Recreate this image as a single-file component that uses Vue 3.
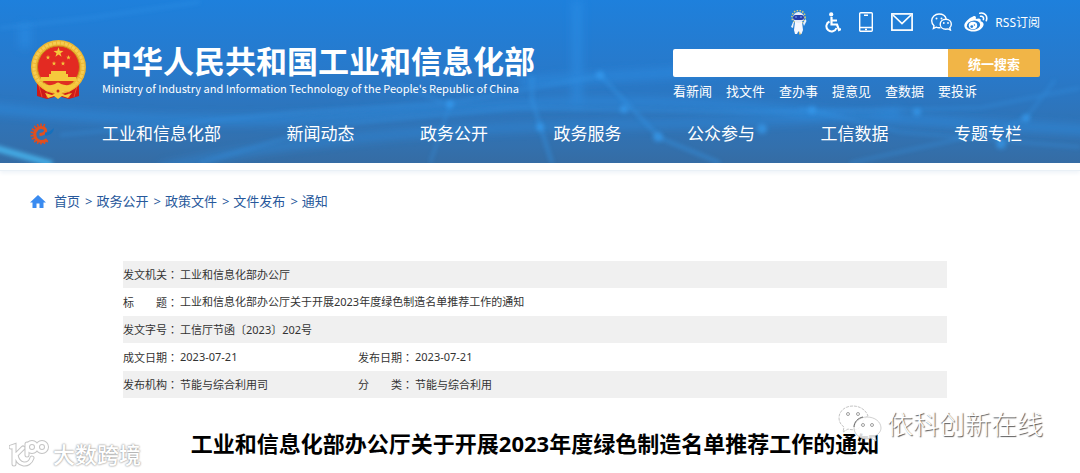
<script setup>
const searchLinks = ['看新闻', '找文件', '查办事', '提意见', '查数据', '要投诉']
const navItems = ['工业和信息化部', '新闻动态', '政务公开', '政务服务', '公众参与', '工信数据', '专题专栏']
const crumbs = ['首页', '政务公开', '政策文件', '文件发布', '通知']
const rows = [
  [['发文机关', '工业和信息化部办公厅']],
  [['标　　题', '工业和信息化部办公厅关于开展2023年度绿色制造名单推荐工作的通知']],
  [['发文字号', '工信厅节函〔2023〕202号']],
  [['成文日期', '2023-07-21'], ['发布日期', '2023-07-21']],
  [['发布机构', '节能与综合利用司'], ['分　　类', '节能与综合利用']]
]
const star = (cx, cy, r) =>
  Array.from({ length: 10 }, (_, i) => {
    const a = -Math.PI / 2 + (i * Math.PI) / 5
    const d = i % 2 ? r * 0.4 : r
    return `${(cx + d * Math.cos(a)).toFixed(2)},${(cy + d * Math.sin(a)).toFixed(2)}`
  }).join(' ')
const rays = Array.from({ length: 13 }, (_, i) => 50 + i * 20)
</script>

<template>
  <div class="page">
    <header class="banner">
      <svg class="backdrop" viewBox="0 0 1080 163" preserveAspectRatio="none" aria-hidden="true">
        <defs>
          <filter id="soft" x="-20%" y="-50%" width="140%" height="200%"><feGaussianBlur stdDeviation="2" /></filter>
          <filter id="softer" x="-50%" y="-50%" width="200%" height="200%"><feGaussianBlur stdDeviation="5" /></filter>
        </defs>
        <g filter="url(#softer)" fill="none" stroke="#2d93ea" opacity=".55">
          <path d="M577 0V108" stroke-width="9" />
          <path d="M25 25V48" stroke-width="10" />
          <path d="M-10 108Q200 130 400 112T760 108T1090 130" stroke-width="8" />
          <path d="M160 168Q330 130 600 125T900 110" stroke-width="6" />
          <path d="M520 82L720 70" stroke-width="8" />
        </g>
        <g filter="url(#soft)" fill="none" stroke="#3498ea" opacity=".5">
          <path d="M200 163L330 125L520 108L740 112L980 108L1080 88" stroke-width="2" />
          <path d="M60 135L300 112L450 103L600 76" stroke-width="2" />
          <path d="M532 75L532 100L552 163" stroke-width="3" />
          <path d="M600 75L660 138L720 163" stroke-width="3" />
          <path d="M850 163L1000 130L1026 118L1055 80" stroke-width="2" />
          <path d="M800 108L900 132L1080 147" stroke-width="2" />
          <path d="M430 163L450 105L400 85" stroke-width="2" />
          <path d="M0 28L90 18L200 2" stroke-width="2" />
        </g>
        <g filter="url(#soft)" fill="#38a0f5" opacity=".6">
          <circle cx="450" cy="104" r="4" /><circle cx="540" cy="127" r="4" />
          <circle cx="600" cy="75" r="4" /><circle cx="624" cy="109" r="4" />
          <circle cx="658" cy="137" r="5" /><circle cx="762" cy="129" r="5" />
          <circle cx="812" cy="110" r="4" /><circle cx="917" cy="112" r="4" />
          <circle cx="1026" cy="118" r="4" /><circle cx="1001" cy="144" r="5" />
        </g>
        <path d="M-5 148L52 164" stroke="#4abcf5" stroke-width="6" filter="url(#soft)" opacity=".8" />
      </svg>

      <div class="inner">
        <ul class="tools">
          <li><a href="#" aria-label="智能问答">
            <svg width="17" height="25" viewBox="0 0 17 25">
              <circle cx="8.5" cy="7" r="6.6" fill="none" stroke="#d8cb70" stroke-width="1.6" stroke-dasharray="1.5 1.4" />
              <path d="M4 12L3 18L1 17L3 12ZM13 13L15.500 9L16.500 11L14 16Z" fill="#e8eff9" />
              <path d="M5 12H12L13 20L11.500 24H9.500L8.500 21L7 24H5L4 20Z" fill="#f5f8ff" />
              <path d="M9.500 21L9 24.500H11Z" fill="#d6b95c" />
              <ellipse cx="8.500" cy="7.500" rx="5.600" ry="5.400" fill="#e5edfa" />
              <rect x="3" y="5" width="11" height="5" rx="2.500" fill="#263fab" />
              <path d="M5 7H7M10 7H12" stroke="#6ca8ff" />
            </svg></a></li>
          <li><a href="#" aria-label="无障碍">
            <svg width="16" height="21" viewBox="0 0 16 21" fill="none" stroke="#fff" stroke-width="2">
              <circle cx="6.200" cy="2.400" r="2.100" fill="#fff" stroke="none" />
              <path d="M6.500 5V12.500H12L14 18L16 17" stroke-width="2.200" /><path d="M6.500 8.500H12" />
              <path d="M4.500 9.500A5.200 5.200 0 1 0 11.500 16" />
            </svg></a></li>
          <li><a href="#" aria-label="手机版">
            <svg width="14" height="20" viewBox="0 0 14 20" fill="none" stroke="#fff" stroke-width="1.400">
              <rect x=".7" y=".7" width="12.600" height="18.600" rx="1" /><path d="M1 15.500H13M5 3.200H9M6 17.500H8" />
            </svg></a></li>
          <li><a href="#" aria-label="邮箱">
            <svg width="22" height="18" viewBox="0 0 22 18" fill="none" stroke="#fff" stroke-width="1.700">
              <rect x=".9" y=".9" width="20.200" height="16.200" /><path d="M2 2L11 10.500L20 2" />
            </svg></a></li>
          <li><a href="#" aria-label="微信">
            <svg width="21" height="18" viewBox="0 0 21 18" fill="none" stroke="#fff" stroke-width="1.400">
              <path d="M9.500 14.500C8 15 6.500 14.800 5.200 14.200L2.400 15.500L3 12.800C1.500 11.500 .7 9.800 .7 7.800C.7 3.900 4 1 8 1C11.600 1 14.500 3.100 15.200 6" />
              <path d="M14.800 6.200C11.600 6.200 9.200 8.400 9.200 11.200C9.200 14 11.600 16.200 14.800 16.200L17 15.900L19.400 17L18.800 14.800C19.800 13.800 20.300 12.600 20.300 11.200C20.300 8.400 18 6.200 14.800 6.200Z" />
              <g fill="#fff" stroke="none"><circle cx="5.500" cy="5.500" r="1" /><circle cx="10.500" cy="5.500" r="1" /><circle cx="12.800" cy="10" r=".9" /><circle cx="17" cy="10" r=".9" /></g>
            </svg></a></li>
          <li class="social"><a href="#" aria-label="微博">
            <svg width="24" height="20" viewBox="0 0 24 20">
              <path d="M9 4.500C11 3.500 12.500 4.500 11.800 7C15 5.800 17.500 6.300 16.600 9.300C19.200 10 20.500 12 19 14.500C17.400 17.500 13.500 19.500 9.300 19.500C4 19.500 .3 17 .3 13.500C.3 10.500 5 6 9 4.500Z" fill="#fff" />
              <ellipse cx="9.500" cy="13.200" rx="6.700" ry="4.600" fill="#247ed6" transform="rotate(-8 9.500 13.200)" />
              <ellipse cx="9" cy="13.500" rx="4.200" ry="3.700" fill="#fff" />
              <circle cx="7.800" cy="14.600" r="1.400" fill="#247ed6" /><circle cx="10.400" cy="13" r=".7" fill="#247ed6" />
              <path d="M15.800 1.200C20.500 .1 24 4 22.300 8.600M16.600 4.300C18.700 3.900 20 5.500 19.400 7.600" fill="none" stroke="#fff" stroke-width="1.600" stroke-linecap="round" />
            </svg></a><a href="#">RSS订阅</a></li>
        </ul>

        <div class="masthead">
          <svg class="emblem" width="56" height="60" viewBox="0 0 56 60" role="img" aria-label="国徽">
            <path d="M7 42L7 56L17 59L28 56L39 59L49 56L49 42Z" fill="#cd1a18" />
            <path d="M9 46L12 57M17 49V58M47 46L44 57M39 49V58" stroke="#ee4630" />
            <ellipse cx="28.500" cy="27" rx="27.500" ry="27" fill="#edb632" />
            <ellipse cx="28.500" cy="27" rx="24.500" ry="24" fill="none" stroke="#f6cd52" stroke-width="3" stroke-dasharray="3 1" />
            <circle cx="28.500" cy="27" r="21" fill="#e32a22" stroke="#cb8b1c" />
            <g fill="#f5c83c">
              <polygon :points="star(28.500, 12.500, 5.200)" /><polygon :points="star(18, 17.500, 2.400)" />
              <polygon :points="star(38.500, 17.500, 2.400)" /><polygon :points="star(24, 23.500, 2.400)" /><polygon :points="star(33, 23.500, 2.400)" />
              <path d="M21 31H36V34H38V37H46L47 41H10L11 37H19V34H21Z" />
              <path d="M8 42Q19 47 25 44L28 42L31 44Q38 47 49 42L40 51H32L28 48L24 51H16Z" />
              <path d="M15 53L22 55L26 53H31L35 55L42 53L38 58L32 56L28 59L24 56L18 58Z" />
              <circle cx="28" cy="51" r="4" />
            </g>
            <path d="M13 42H43" stroke="#d73620" /><circle cx="28" cy="51" r="1.500" fill="#c92d1d" />
          </svg>
          <div class="names">
            <h1>中华人民共和国工业和信息化部</h1>
            <p lang="en">Ministry of Industry and Information Technology of the People's Republic of China</p>
          </div>
          <div class="search">
            <form @submit.prevent>
              <input type="text" aria-label="搜索关键词" />
              <button type="submit">统一搜索</button>
            </form>
            <div class="quick"><a v-for="s in searchLinks" :key="s" href="#">{{ s }}</a></div>
          </div>
        </div>

        <nav class="nav">
          <svg width="24" height="22" viewBox="0 0 24 22" aria-hidden="true">
            <g stroke="#dc4c20" stroke-width="1.600">
              <path v-for="a in rays" :key="a" d="M18 11H21.600" :transform="`rotate(${a} 11 11)`" />
            </g>
            <path d="M17 16.500C13 20 6 18.500 5 13C4 7 9 3.500 13.500 5C17.500 6.500 15.500 11.500 9.500 11.500" fill="none" stroke="#e0501f" stroke-width="3" />
            <path d="M15 12.500C20 12.500 23.500 10 24 5C21 7.500 19 9.500 15 9.500Z" fill="#1670bd" />
          </svg>
          <div class="menu"><a v-for="n in navItems" :key="n" href="#">{{ n }}</a></div>
        </nav>
      </div>
    </header>
    <div class="edge"></div>

    <main class="inner">
      <nav class="crumbs" aria-label="当前位置">
        <svg width="16" height="13" viewBox="0 0 16 13" aria-hidden="true"><path d="M8 0L16 7.500H13.500V13H9.500V8.500H6.500V13H2.500V7.500H0Z" fill="#3a8bf0" /></svg>
        <template v-for="(c, i) in crumbs" :key="c"><span v-if="i">&gt;</span><a href="#">{{ c }}</a></template>
      </nav>

      <table>
        <colgroup><col class="label" /><col class="value" /><col class="label" /><col /></colgroup>
        <tbody>
          <tr v-for="row in rows" :key="row[0][0]">
            <template v-for="[k, v] in row" :key="k">
              <th scope="row">{{ k }}<span class="colon">：</span></th>
              <td :colspan="row.length === 1 ? 3 : 1">{{ v }}</td>
            </template>
          </tr>
        </tbody>
      </table>

      <h2>工业和信息化部办公厅关于开展2023年度绿色制造名单推荐工作的通知</h2>
    </main>

    <div class="mark mark-left">
      <svg width="40" height="28" viewBox="0 0 40 28" fill="none" stroke-linecap="round">
        <g stroke="#c4c4c4" stroke-width="5"><path d="M2 7L5 6V24M14 8L7 15C9 26 20 27 23 18M18 15V4" /><circle cx="23" cy="7" r="4.500" /><circle cx="33" cy="7" r="4.500" /></g>
        <g stroke="#fff" stroke-width="3"><path d="M2 7L5 6V24M14 8L7 15C9 26 20 27 23 18M18 15V4" /><circle cx="23" cy="7" r="4.500" /><circle cx="33" cy="7" r="4.500" /></g>
      </svg>
      <span>大数跨境</span>
    </div>
    <div class="mark mark-right">
      <svg width="44" height="38" viewBox="0 0 44 38">
        <path d="M15 1C7 1 1 6 1 13C1 17 3 20 6 22L5 27L10 24C13 25 17 25 20 24C23 21 26 13 30 11C28 5 22 1 15 1Z" fill="#fff" fill-opacity=".85" stroke="#b5b5b5" stroke-width=".8" stroke-dasharray="3 1" />
        <path d="M29 12C22 12 16 17 16 23C16 29 22 34 29 34L33 33L38 36L37 31C41 29 43 26 43 23C43 17 37 12 29 12Z" fill="#fff" fill-opacity=".85" stroke="#c4c4c4" stroke-width=".8" />
        <path d="M16 22C16 17 20 13 25 12" fill="none" stroke="#666" />
        <g fill="#fff" stroke="#888" stroke-width=".8"><circle cx="10" cy="9" r="1.500" /><circle cx="20" cy="9" r="1.500" /><circle cx="25" cy="20" r="1.500" /><circle cx="34" cy="20" r="1.500" /></g>
      </svg>
      <span>依科创新在线</span>
    </div>
  </div>
</template>

<style>
body { margin: 0; background: #fff; }
</style>

<style scoped>
.page {
  position: relative;
  min-height: 100vh;
  overflow: hidden;
  font-family: "Noto Sans", "Noto Sans CJK SC", sans-serif;
}
a { color: inherit; text-decoration: none; }
h1, h2, p, ul { margin: 0; padding: 0; }
svg { display: block; flex: none; }
.inner { padding: 0 40px 0 30px; }
.banner {
  position: relative;
  color: #fff;
  background: linear-gradient(#1e80dc, #2879ca 45%, #3370ad 90%, #356ca4);
}
.banner .inner { position: relative; }
.backdrop { position: absolute; inset: 0; width: 100%; height: 100%; }
.tools {
  display: flex;
  justify-content: flex-end;
  align-items: center;
  gap: 18px;
  height: 40px;
  padding-top: 4px;
  box-sizing: border-box;
  list-style: none;
  font-size: 12px;
}
.social { display: flex; align-items: center; gap: 7px; margin-left: -6px; }
.masthead { display: flex; height: 74px; }
.names { margin-left: 15px; flex: 1; white-space: nowrap; }
h1 { font-size: 31px; line-height: 42px; font-weight: 700; }
.names p { padding-left: 1px; font: 11px/12px "Noto Sans CJK SC", sans-serif; }
.search { width: 367px; padding-top: 9px; }
form { display: flex; height: 28px; border-radius: 2px; overflow: hidden; }
input { flex: 1; min-width: 0; border: 0; padding: 0 8px; background: #fff; outline: none; }
button {
  width: 92px;
  padding: 0;
  border: 0;
  color: #fff;
  background: #f1b547;
  font: 700 13px "Noto Sans", "Noto Sans CJK SC", sans-serif;
}
.quick { display: flex; gap: 14px; margin-top: 4px; font-size: 13px; line-height: 20px; }
.nav { display: flex; align-items: center; height: 49px; }
.nav > svg { margin-bottom: 10px; }
.menu {
  display: flex;
  flex: 1;
  justify-content: space-between;
  margin: 0 18px 10px 48px;
  font-size: 17px;
  line-height: 24px;
}
.edge { height: 7px; border-bottom: 1px solid #e9f0f6; box-shadow: 0 2px 4px #eef3f8; }
.crumbs {
  display: flex;
  align-items: center;
  margin-top: 20px;
  color: #27589b;
  font-size: 13px;
  line-height: 20px;
}
.crumbs span { margin: 0 4px 0 5px; }
.crumbs svg { margin-right: 8px; }
table {
  width: calc(100% - 186px);
  margin: 50px 93px 0;
  border-collapse: collapse;
  table-layout: fixed;
  color: #333;
  font-size: 11px;
  line-height: 16px;
}
.label { width: 57px; }
.value { width: 178px; }
.colon { font-family: "Noto Sans CJK TC", sans-serif; }
th, td { height: 28px; padding: 0; text-align: left; font-weight: 400; white-space: nowrap; }
tr:nth-child(odd) { background: #f0f0f0; }
tr:nth-child(odd) > * { height: 27px; }
h2 { margin-top: 29px; color: #000; text-align: center; font-size: 22px; line-height: 32px; font-weight: 700; white-space: nowrap; }
.mark { position: absolute; display: flex; align-items: center; color: #fff; white-space: nowrap; }
.mark-left {
  left: 9px;
  bottom: 4px;
  gap: 4px;
  font-size: 22px;
  line-height: 30px;
  font-weight: 500;
  text-shadow: 0 0 2px #999, 0 0 2px #aaa;
}
.mark-right {
  right: 37px;
  bottom: 30px;
  gap: 5px;
  font-size: 26px;
  line-height: 38px;
  font-weight: 300;
  text-shadow: 1px 1px 1px #555;
}
</style>
